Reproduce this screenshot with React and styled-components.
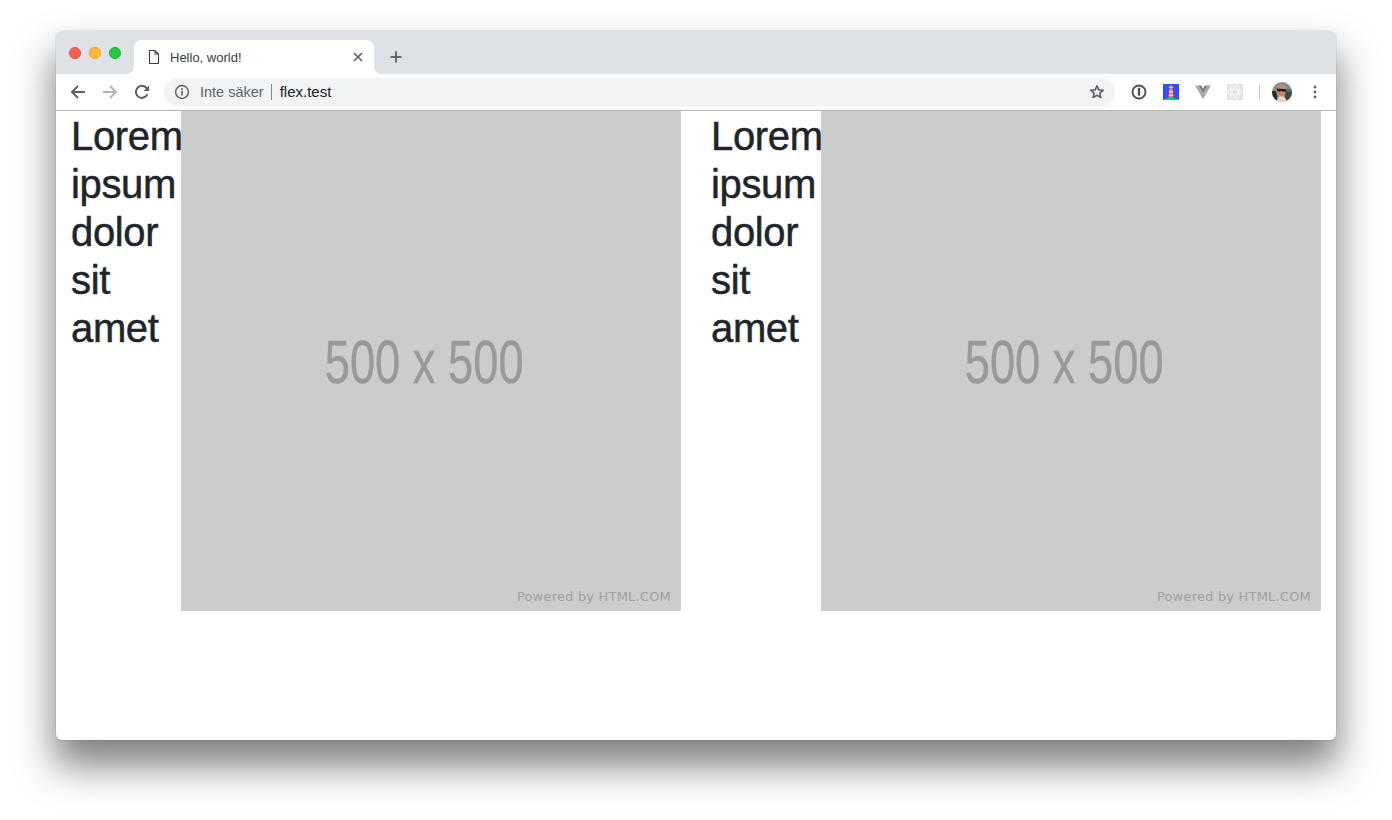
import React from "react";
import styled, { createGlobalStyle } from "styled-components";

const GlobalStyle = createGlobalStyle`
  html, body {
    margin: 0;
    background: #fff;
  }
  * {
    box-sizing: border-box;
  }
`;

const Page = styled.div`
  width: 1392px;
  height: 820px;
  padding: 31px 56px 0;
  overflow: hidden;
`;

const Window = styled.div`
  width: 1280px;
  height: 709px;
  border-radius: 6px;
  background: #fff;
  overflow: hidden;
  box-shadow: 0 0 0 1px rgba(0, 0, 0, 0.06), 0 24px 38px 2px rgba(0, 0, 0, 0.5);
`;

const TabStrip = styled.div`
  height: 43px;
  background: #dee1e6;
  display: flex;
  align-items: flex-end;
  padding-left: 13px;
`;

const Lights = styled.div`
  display: flex;
  gap: 8px;
  align-self: flex-start;
  margin-top: 16px;
  margin-right: 13px;
`;

const Light = styled.span`
  width: 12px;
  height: 12px;
  border-radius: 50%;
  background: ${(p) => p.$color};
  border: 1px solid ${(p) => p.$edge};
`;

const Tab = styled.div`
  position: relative;
  width: 240px;
  height: 34px;
  background: #fff;
  border-radius: 8px 8px 0 0;
  display: flex;
  align-items: center;
  padding: 0 8px 0 12px;
  font: 13px "Liberation Sans", Arial, sans-serif;
  color: #3c4043;

  &::before,
  &::after {
    content: "";
    position: absolute;
    bottom: 0;
    width: 8px;
    height: 8px;
  }
  &::before {
    left: -8px;
    background: radial-gradient(circle at 0 0, #dee1e6 7.5px, #fff 8.5px);
  }
  &::after {
    right: -8px;
    background: radial-gradient(circle at 100% 0, #dee1e6 7.5px, #fff 8.5px);
  }
`;

const TabTitle = styled.span`
  flex: 1;
  margin-left: 8px;
`;

const NewTab = styled.div`
  width: 16px;
  height: 16px;
  margin: 0 0 9px 14px;
  display: flex;
`;

const Toolbar = styled.div`
  height: 37px;
  border-bottom: 1px solid #b9b9b9;
  display: flex;
  align-items: center;
  padding: 0 0 1px 14px;
  background: #fff;
`;

const NavButtons = styled.div`
  display: flex;
  gap: 16px;
  margin-right: 14px;
`;

const Omnibox = styled.div`
  flex: none;
  width: 951px;
  height: 28px;
  border-radius: 14px;
  background: #f1f3f4;
  display: flex;
  align-items: center;
  padding: 0 10px;
  font: 14.5px "Liberation Sans", Arial, sans-serif;
`;

const Security = styled.span`
  color: #5f6368;
  margin-left: 10px;
  padding-right: 7px;
  border-right: 1px solid #80868b;
  line-height: 16px;
`;

const Host = styled.span`
  flex: 1;
  color: #202124;
  margin-left: 8px;
  font-size: 15px;
`;

const Extensions = styled.div`
  display: flex;
  align-items: center;
  margin-left: 16px;
`;

const Divider = styled.span`
  width: 1px;
  height: 16px;
  background: #c6c6c6;
  margin-right: 12px;
`;

const ExtensionSlot = styled.span`
  display: flex;
  width: 16px;
  height: 16px;
  margin-right: 16px;
`;

const MenuSlot = styled.span`
  display: flex;
  width: 16px;
  height: 16px;
  margin-left: 15px;
`;

const Content = styled.main`
  display: flex;
  height: 629px;
  align-items: flex-start;
`;

const Column = styled.section`
  width: 640px;
  padding: 0 15px;
  display: flex;
`;

const Heading = styled.h1`
  width: 110px;
  margin: 0;
  padding-top: 1px;
  flex: none;
  font: 400 40px/48px "Liberation Sans", Arial, sans-serif;
  letter-spacing: -0.35px;
  -webkit-text-stroke: 0.5px #212529;
  color: #212529;
`;

const Placeholder = styled.div`
  position: relative;
  width: 500px;
  height: 500px;
  flex: none;
  background: #ccc;
  display: flex;
  align-items: center;
  justify-content: center;
  padding: 2px 14px 0 0;
`;

const Size = styled.span`
  display: block;
  font: 400 62px/72px "Liberation Sans", Arial, sans-serif;
  -webkit-text-stroke: 0.4px #999;
  color: #999;
  white-space: nowrap;
  transform: scaleX(0.73);
`;

const Credit = styled.span`
  position: absolute;
  right: 10px;
  bottom: 6px;
  font: 13px/16px "DejaVu Sans", sans-serif;
  letter-spacing: 0.2px;
  color: #a0a0a0;
  white-space: nowrap;
`;

const Icon = ({ children, size = 16, box = 16 }) => (
  <svg width={size} height={size} viewBox={`0 0 ${box} ${box}`} fill="none" style={{ display: "block", flex: "none" }}>
    {children}
  </svg>
);

const Back = ({ color }) => (
  <Icon>
    <path d="M15 8H2M8 2 2 8l6 6" stroke={color} strokeWidth="2" />
  </Icon>
);

const Forward = ({ color }) => (
  <Icon>
    <path d="M1 8h13M8 2l6 6-6 6" stroke={color} strokeWidth="2" />
  </Icon>
);

const Reload = () => (
  <Icon>
    <path d="M13.4 10.200A6 6 0 1 1 12.300 3.800L14 5.500" stroke="#5f6368" strokeWidth="2" />
    <path d="M15 1.500V7H9.500z" fill="#5f6368" />
  </Icon>
);

const Info = () => (
  <Icon>
    <circle cx="8" cy="8" r="6.400" stroke="#5f6368" strokeWidth="1.500" />
    <path d="M8 7v4.400" stroke="#5f6368" strokeWidth="1.700" />
    <circle cx="8" cy="5" r="1" fill="#5f6368" />
  </Icon>
);

const Star = () => (
  <Icon>
    <path d="M8 1.900l1.800 4 4.400.4-3.300 2.900 1 4.300L8 11.300l-3.900 2.200 1-4.300-3.300-2.900 4.400-.4z" stroke="#5f6368" strokeWidth="1.600" strokeLinejoin="round" />
  </Icon>
);

const PageIcon = () => (
  <Icon>
    <path d="M3.500 1.500H9L12.500 5v9.500h-9z M9 1.500V5h3.500" stroke="#3c4043" strokeWidth="1.100" />
  </Icon>
);

const Close = () => (
  <Icon>
    <path d="M4 4l8 8M12 4l-8 8" stroke="#5f6368" strokeWidth="1.700" />
  </Icon>
);

const Plus = () => (
  <Icon>
    <path d="M8 2.500v11M2.500 8h11" stroke="#5f6368" strokeWidth="1.900" />
  </Icon>
);

const OnePassword = () => (
  <Icon>
    <circle cx="8" cy="8" r="6.500" stroke="#4d4f53" strokeWidth="1.900" />
    <path d="M8 3.800v8" stroke="#4d4f53" strokeWidth="2.300" />
  </Icon>
);

const Lighthouse = () => (
  <Icon>
    <rect width="16" height="16" fill="#304ffe" />
    <path d="M0 16c2-1.600 5-2 8-2s6 .4 8 2z" fill="#0cce6b" />
    <path d="M6.400 4h3.200l.8 10H5.600z" fill="#f4734f" />
    <path d="M6.100 6.800h3.800l.2 1.600H6z M5.800 10.400h4.400l.2 1.600H5.600z" fill="#ffd0b8" />
    <path d="M5.800 3.200 8 1.300l2.200 1.900V4H5.800z" fill="#ffc24a" />
  </Icon>
);

const Vue = () => (
  <Icon>
    <path d="M0 1.400h3.400L8 9.200l4.600-7.800H16L8 15z" fill="#a9a9a9" />
    <path d="M3.400 1.400h2.800L8 4.600l1.800-3.200h2.800L8 9.200z" fill="#7f7f7f" />
  </Icon>
);

const ReactTools = () => (
  <Icon>
    <rect width="16" height="16" fill="#e4e4e4" />
    <g stroke="#f7f7f7" strokeWidth="1.100">
      <ellipse cx="8" cy="8" rx="6.800" ry="3" />
      <ellipse cx="8" cy="8" rx="6.800" ry="3" transform="rotate(60 8 8)" />
      <ellipse cx="8" cy="8" rx="6.800" ry="3" transform="rotate(120 8 8)" />
    </g>
  </Icon>
);

const Avatar = () => (
  <Icon size={20} box={20}>
    <clipPath id="avatar-clip">
      <circle cx="10" cy="10" r="10" />
    </clipPath>
    <g clipPath="url(#avatar-clip)">
      <rect width="20" height="20" fill="#7f8f92" />
      <rect x="13" y="9" width="7" height="11" fill="#3f4a3e" />
      <rect x="15" y="7" width="5" height="3" fill="#4a6a86" />
      <rect y="9" width="5" height="11" fill="#2e2926" />
      <ellipse cx="9" cy="8.500" rx="5" ry="7" fill="#b98d78" />
      <path d="M5 20c.5-4 2-6 4.500-6s4.500 2 5.500 6z" fill="#efd0c4" />
      <path d="M4.500 6.500 14.500 7.500 14 9.500l-3 .3-1.500-1.200L8 9.800 5.500 9z" fill="#17120f" />
    </g>
  </Icon>
);

const Kebab = () => (
  <Icon>
    <g fill="#5f6368">
      <circle cx="8" cy="3" r="1.400" />
      <circle cx="8" cy="8" r="1.400" />
      <circle cx="8" cy="13" r="1.400" />
    </g>
  </Icon>
);

const columns = ["left", "right"];

export default function App() {
  return (
    <>
      <GlobalStyle />
      <Page>
        <Window>
          <TabStrip>
            <Lights>
              <Light $color="#ff5f57" $edge="#e2463f" />
              <Light $color="#ffbd2e" $edge="#e1a116" />
              <Light $color="#28c940" $edge="#14ae2e" />
            </Lights>
            <Tab>
              <PageIcon />
              <TabTitle>Hello, world!</TabTitle>
              <Close />
            </Tab>
            <NewTab>
              <Plus />
            </NewTab>
          </TabStrip>
          <Toolbar>
            <NavButtons>
              <Back color="#5f6368" />
              <Forward color="#b4b6b8" />
              <Reload />
            </NavButtons>
            <Omnibox>
              <Info />
              <Security>Inte säker</Security>
              <Host>flex.test</Host>
              <Star />
            </Omnibox>
            <Extensions>
              <ExtensionSlot><OnePassword /></ExtensionSlot>
              <ExtensionSlot><Lighthouse /></ExtensionSlot>
              <ExtensionSlot><Vue /></ExtensionSlot>
              <ExtensionSlot><ReactTools /></ExtensionSlot>
              <Divider />
              <Avatar />
              <MenuSlot><Kebab /></MenuSlot>
            </Extensions>
          </Toolbar>
          <Content>
            {columns.map((id) => (
              <Column key={id}>
                <Heading>Lorem ipsum dolor sit amet</Heading>
                <Placeholder>
                  <Size>500 x 500</Size>
                  <Credit>Powered by HTML.COM</Credit>
                </Placeholder>
              </Column>
            ))}
          </Content>
        </Window>
      </Page>
    </>
  );
}
